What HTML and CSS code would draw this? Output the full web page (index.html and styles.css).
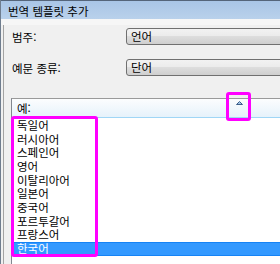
FILE: index.html
```html
<!DOCTYPE html>
<html lang="ko">
<head>
<meta charset="utf-8">
<link rel="stylesheet" href="styles.css">
</head>
<body>
<div class="window">
  <div class="titlebar"><span class="title">번역 템플릿 추가</span></div>
  <div class="title-band"></div>
  <div class="panel">
    <div class="row">
      <span class="label">범주:</span>
      <div class="combo">언어</div>
    </div>
    <div class="row row2">
      <span class="label">예문 종류:</span>
      <div class="combo">단어</div>
    </div>
    <div class="list">
      <div class="list-head">
        <span class="head-text">예:</span>
        <svg class="sort" width="7" height="4" viewBox="0 0 7 4"><path d="M0.5 3.5 L3.5 0.5 L6.5 3.5 Z" fill="#9fc3e6" stroke="#3d5f8a" stroke-width="1"/></svg>
      </div>
      <ul class="items">
        <li>독일어</li>
        <li>러시아어</li>
        <li>스페인어</li>
        <li>영어</li>
        <li>이탈리아어</li>
        <li>일본어</li>
        <li>중국어</li>
        <li>포르투갈어</li>
        <li>프랑스어</li>
        <li class="selected">한국어</li>
      </ul>
    </div>
  </div>
  <div class="mark mark-list"></div>
  <div class="mark mark-arrow"></div>
</div>
</body>
</html>
```
FILE: styles.css
```css
html, body {
  margin: 0;
  padding: 0;
}
body {
  width: 280px;
  height: 264px;
  overflow: hidden;
  background: #f0f0f0;
  font-family: "Noto Sans CJK KR", "Noto Sans", sans-serif;
  font-size: 11.5px;
  color: #000;
}
.window {
  position: relative;
  width: 279px;
  height: 264px;
  border-left: 1px solid #6f7d8e;
  overflow: hidden;
}
.titlebar {
  height: 18px;
  border-top: 1px solid #55657a;
  background: linear-gradient(#a9c5e6, #b9d1eb);
  display: flex;
  align-items: center;
  padding-left: 7px;
}
.title {
  line-height: 18px;
  padding-top: 2px;
}
.title-band {
  height: 6px;
  background: #f6f6f6;
}
.panel {
  margin-left: 2px;
  border-left: 1px solid #a3a3a3;
  padding-left: 7px;
  padding-top: 3px;
  height: 239px;
}
.row {
  display: flex;
  align-items: center;
  height: 17px;
}
.row2 {
  margin-top: 14px;
}
.label {
  width: 114px;
  margin-left: 1px;
}
.combo {
  flex: 1;
  height: 15px;
  margin-right: -12px;
  border: 1px solid #707070;
  border-radius: 3px;
  background: linear-gradient(#f2f2f2 0%, #ebebeb 50%, #dddddd 50%, #cfcfcf 100%);
  padding-left: 4px;
  line-height: 15px;
}
.list {
  margin-top: 22px;
  width: 290px;
  border-left: 1px solid #828790;
  border-top: 1px solid #9a9a9a;
  background: #fff;
  height: 170px;
}
.list-head {
  position: relative;
  height: 18px;
  border-bottom: 1px solid #a0d6f6;
  background: linear-gradient(#fcfdfe, #e6f2fb);
  display: flex;
  align-items: center;
  padding-left: 5px;
}
.sort {
  position: absolute;
  left: 224px;
  top: 2px;
}
.items {
  list-style: none;
  margin: 0;
  padding: 1px 0 0 0;
}
.items li {
  height: 13.67px;
  line-height: 13.67px;
  padding-left: 5px;
  white-space: nowrap;
}
.items li.selected {
  background: #3399ff;
  color: #fff;
  box-shadow: inset 0 1px #1683f5, inset 0 -1px #1683f5;
}
.mark {
  position: absolute;
  border: 3px solid #ff00ff;
  border-radius: 3px;
  box-sizing: border-box;
}
.mark-list {
  left: 10px;
  top: 116px;
  width: 87px;
  height: 141px;
}
.mark-arrow {
  left: 225px;
  top: 92px;
  width: 25px;
  height: 29px;
}
```
